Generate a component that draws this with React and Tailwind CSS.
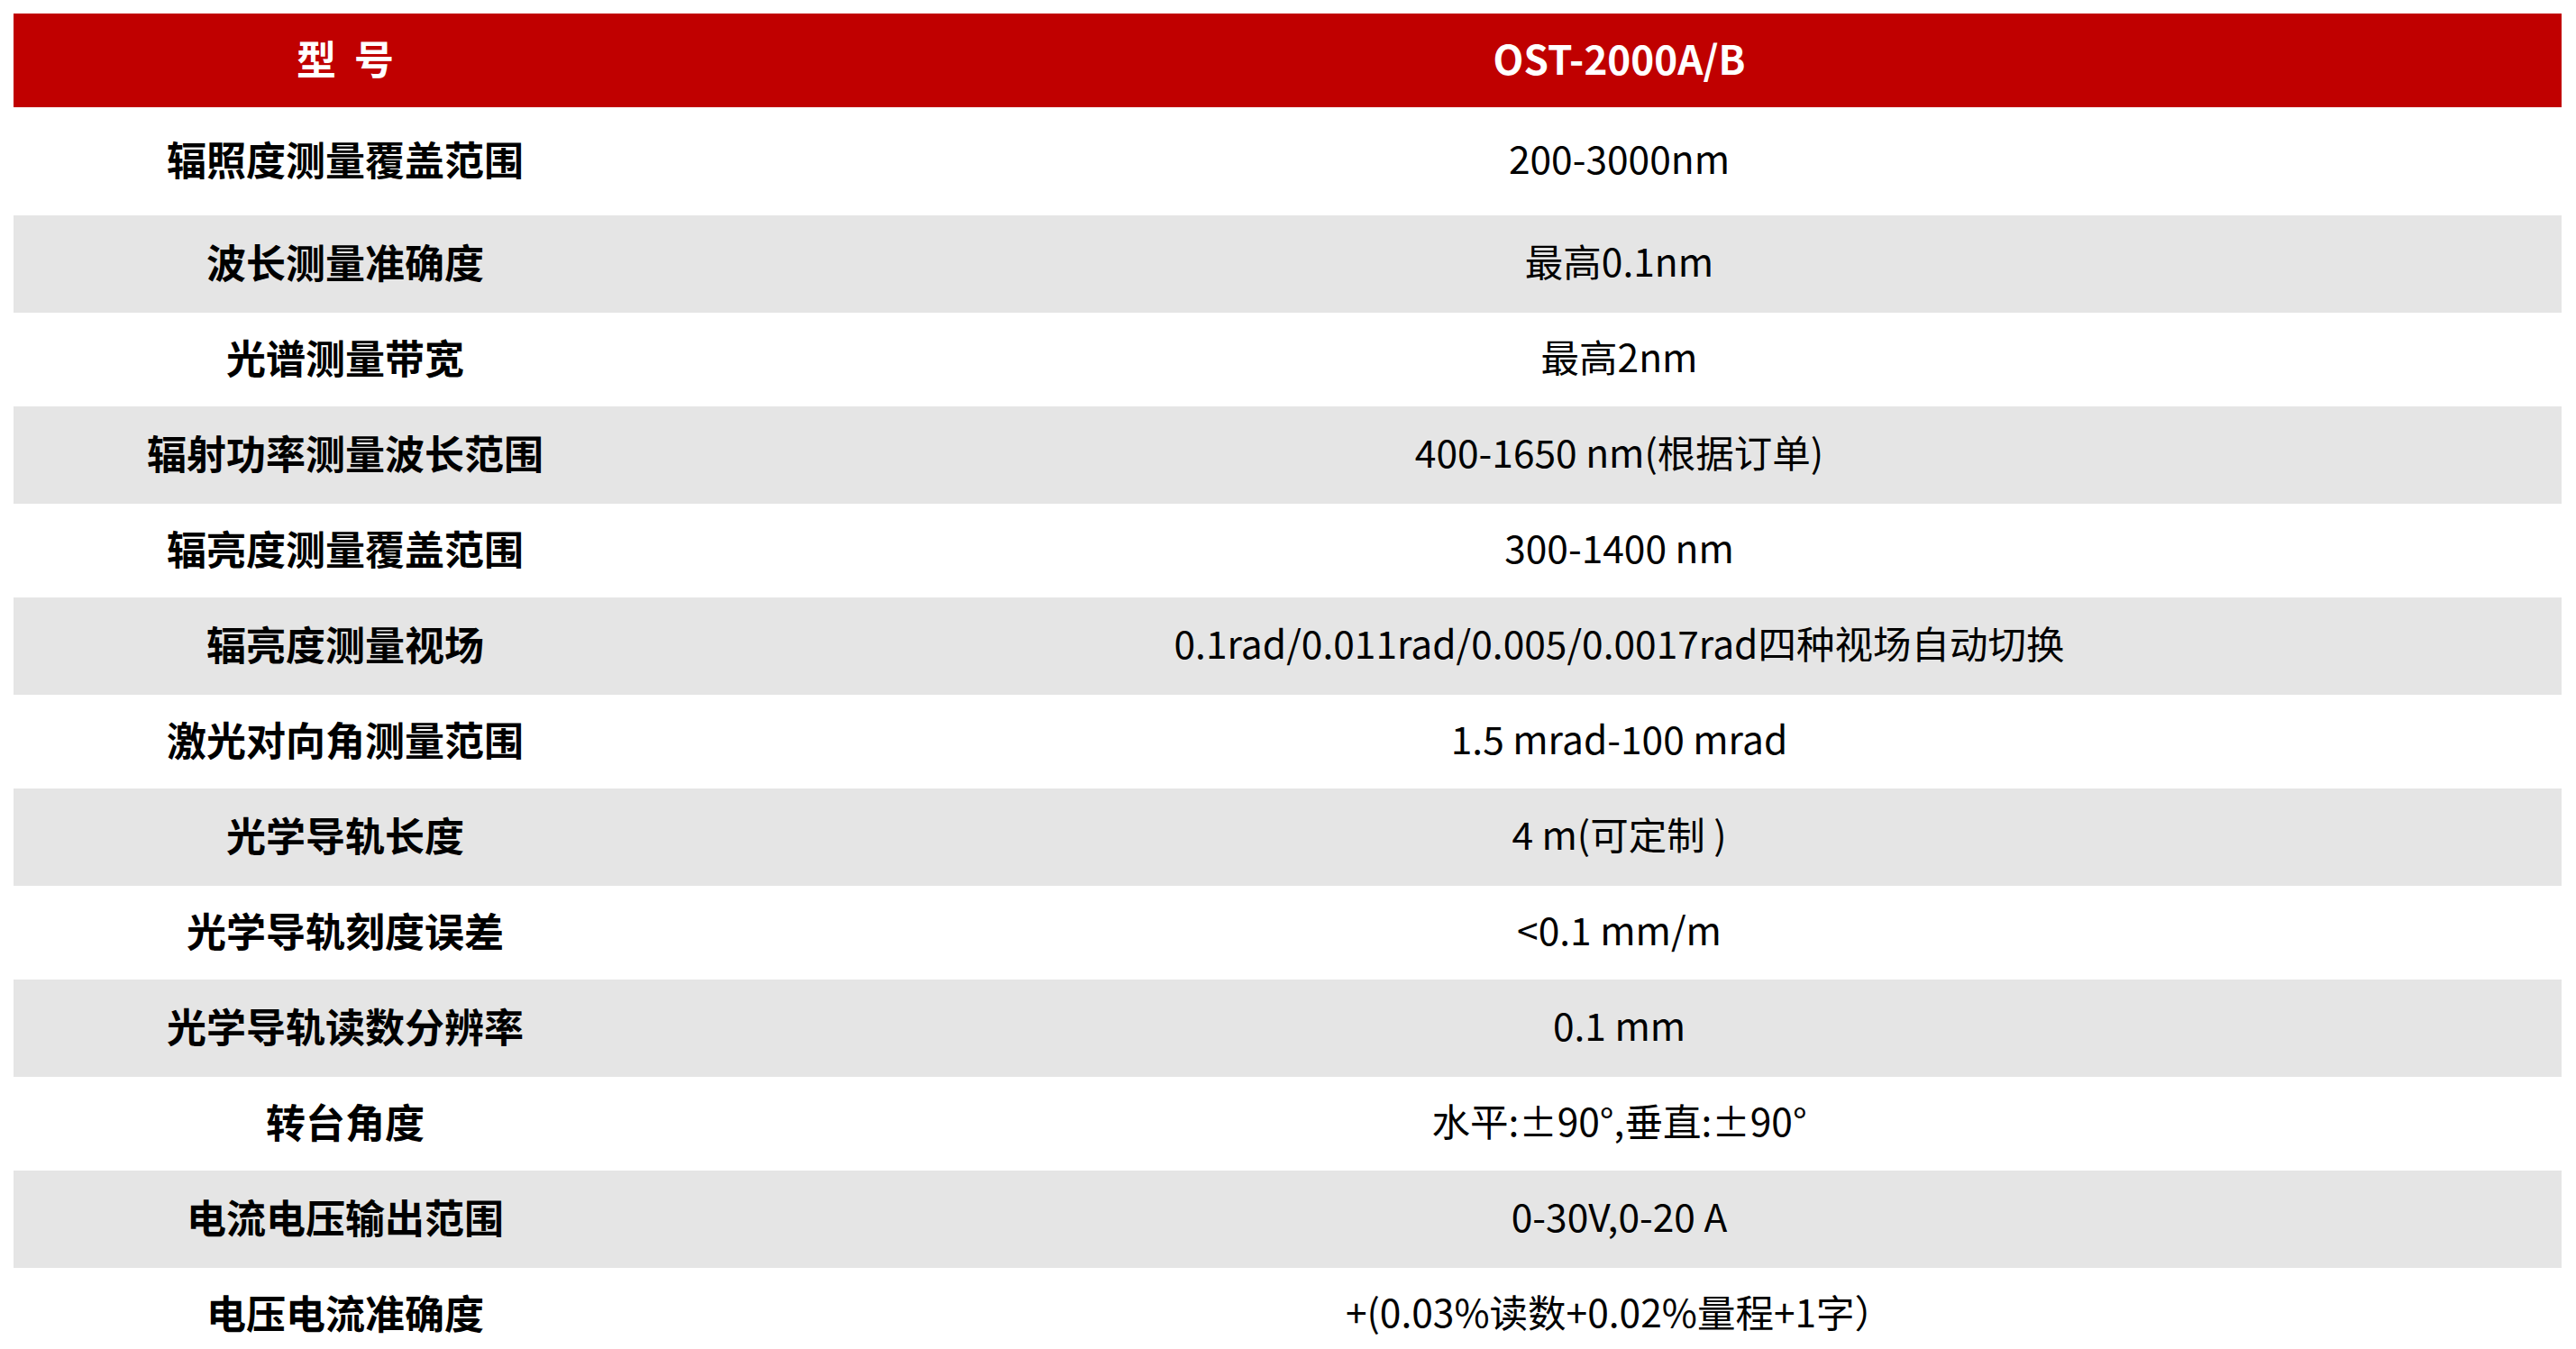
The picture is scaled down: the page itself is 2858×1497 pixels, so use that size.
import React from 'react'

const specs = [
    ['辐照度测量覆盖范围', '200-3000nm'],
    ['波长测量准确度', '最高0.1nm'],
    ['光谱测量带宽', '最高2nm'],
    ['辐射功率测量波长范围', '400-1650 nm(根据订单)'],
    ['辐亮度测量覆盖范围', '300-1400 nm'],
    ['辐亮度测量视场', '0.1rad/0.011rad/0.005/0.0017rad四种视场自动切换'],
    ['激光对向角测量范围', '1.5 mrad-100 mrad'],
    ['光学导轨长度', '4 m(可定制 )'],
    ['光学导轨刻度误差', '<0.1 mm/m'],
    ['光学导轨读数分辨率', '0.1 mm'],
    ['转台角度', '水平:±90°,垂直:±90°'],
    ['电流电压输出范围', '0-30V,0-20 A'],
    ['电压电流准确度', '+(0.03%读数+0.02%量程+1字）'],
]

const SpecTable = () => {
    return (
        <div className="w-[2827px] font-['Noto_Sans_CJK_SC','Noto_Sans',sans-serif] leading-none text-black">
            {/* header */}
            <div className="flex h-[104px] bg-[#c00000] text-white font-bold text-[44px]">
                <div className="w-[736px] flex items-center justify-center pb-[7px]">
                    <span>型</span>
                    <span className="ml-[20px]">号</span>
                </div>
                <div className="flex-1 flex items-center justify-center pb-[7px]">OST-2000A/B</div>
            </div>

            {specs.map(([name, value], i) => {
                const gray = i % 2 === 1
                const height = i === 0 ? 'h-[120px]' : gray ? 'h-[108px]' : 'h-[104px]'
                return (
                    <div key={name} className={`flex ${height} ${gray ? 'bg-[#e5e5e5]' : 'bg-white'}`}>
                        <div className="w-[736px] flex items-center justify-center pb-[7px] font-bold text-[44px]">{name}</div>
                        <div className="flex-1 flex items-center justify-center pb-[7px] text-[42.5px]">{value}</div>
                    </div>
                )
            })}
        </div>
    )
}

export default function App() {
    return (
        <div className="h-[1497px] overflow-hidden bg-white pt-[15px] pl-[15px]">
            <SpecTable />
        </div>
    )
}
